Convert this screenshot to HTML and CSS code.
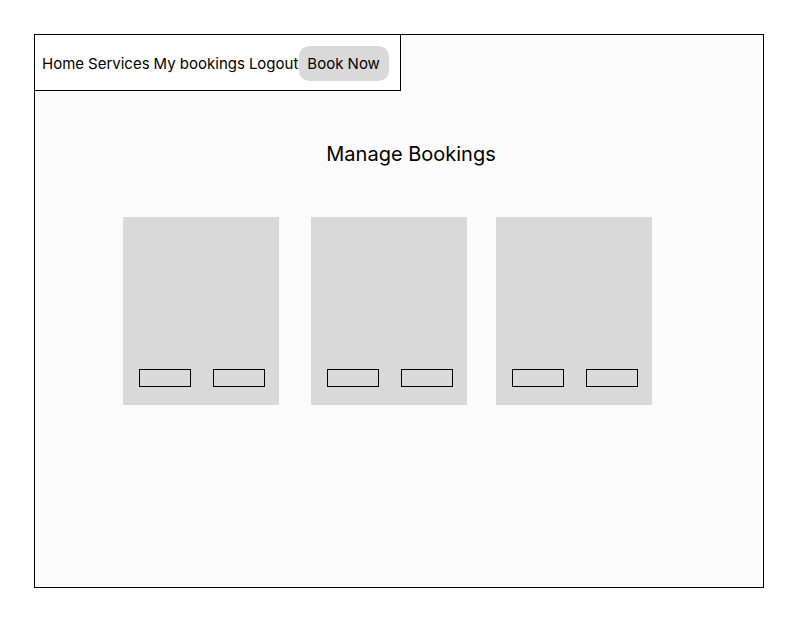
FILE: index.html
```html
<!DOCTYPE html>
<html>
<head>
<meta charset="utf-8">
<link rel="stylesheet" href="styles.css">
</head>
<body>
<div class="frame">
  <nav class="nav">
    <a class="nav-link">Home</a>
    <a class="nav-link">Services</a>
    <a class="nav-link">My bookings</a>
    <a class="nav-link">Logout</a>
    <button class="book-btn">Book Now</button>
  </nav>
  <h1 class="title">Manage Bookings</h1>
  <div class="cards">
    <div class="card"><div class="card-actions"><span class="card-btn"></span><span class="card-btn"></span></div></div>
    <div class="card"><div class="card-actions"><span class="card-btn"></span><span class="card-btn"></span></div></div>
    <div class="card card-last"><div class="card-actions"><span class="card-btn"></span><span class="card-btn"></span></div></div>
  </div>
</div>
</body>
</html>
```
FILE: styles.css
```css
* { box-sizing: border-box; }
html, body { margin: 0; padding: 0; background: #ffffff; }
body { font-family: Inter, "Noto Sans", sans-serif; color: #000; }
.frame {
  margin: 34px 0 0 34px;
  width: 730px;
  height: 554px;
  border: 1px solid #000;
  background: #fbfbfb;
}
.nav {
  margin: -1px 0 0 -1px;
  width: 367px;
  height: 57px;
  border: 1px solid #000;
  background: #ffffff;
  display: flex;
  align-items: center;
  padding: 2px 0 0 7px;
  font-size: 15px;
}
.nav-link { margin-right: 4px; white-space: nowrap; }
.nav-link:nth-child(4) { margin-right: 1px; }
.book-btn {
  font: inherit;
  color: #000;
  background: #d9d9d9;
  border: none;
  border-radius: 10px;
  width: 90px;
  height: 35px;
  padding: 0 0 0 8px;
  text-align: left;
  margin-top: -1px;
}
.title {
  margin: 49px 0 0 0;
  padding-left: 24px;
  text-align: center;
  font-size: 20px;
  font-weight: 400;
  line-height: 28px;
}
.cards {
  display: flex;
  margin: 49px 0 0 88px;
}
.card {
  width: 156px;
  height: 188px;
  background: #d9d9d9;
  margin-right: 32px;
  display: flex;
  align-items: flex-end;
}
.card:nth-child(2) { margin-right: 29px; }
.card-actions {
  display: flex;
  width: 100%;
  padding: 0 14px 18px 16px;
  justify-content: space-between;
}
.card-btn {
  width: 52px;
  height: 18px;
  border: 1px solid #000;
}
```
